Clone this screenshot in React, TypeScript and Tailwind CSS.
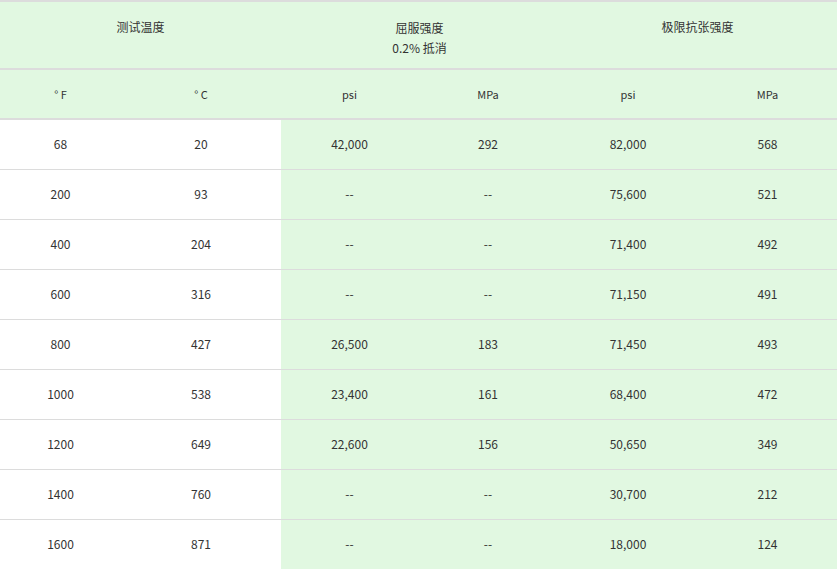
const rows = [
  ['68', '20', '42,000', '292', '82,000', '568'],
  ['200', '93', '--', '--', '75,600', '521'],
  ['400', '204', '--', '--', '71,400', '492'],
  ['600', '316', '--', '--', '71,150', '491'],
  ['800', '427', '26,500', '183', '71,450', '493'],
  ['1000', '538', '23,400', '161', '68,400', '472'],
  ['1200', '649', '22,600', '156', '50,650', '349'],
  ['1400', '760', '--', '--', '30,700', '212'],
  ['1600', '871', '--', '--', '18,000', '124'],
];

const font = { fontFamily: '"Noto Sans CJK SC", "DejaVu Sans", sans-serif' };

export default function App() {
  return (
    <div className="w-[837px] bg-white text-[12px] text-[#333]" style={font}>
      <table className="w-full border-collapse table-fixed">
        <colgroup>
          <col className="w-[121px]" />
          <col className="w-[160px]" />
          <col className="w-[137px]" />
          <col className="w-[140px]" />
          <col className="w-[140px]" />
          <col className="w-[139px]" />
        </colgroup>
        <thead>
          <tr className="h-[68px] bg-[#e1f8e1] border-y-2 border-[#dcdcdc]">
            <th colSpan={2} className="font-normal align-top pt-[16px]">测试温度</th>
            <th colSpan={2} className="font-normal align-top pt-[16px] leading-[20px]">
              屈服强度<br />0.2% 抵消
            </th>
            <th colSpan={2} className="font-normal align-top pt-[16px]">极限抗张强度</th>
          </tr>
          <tr className="h-[50px] bg-[#e1f8e1] border-b-2 border-[#dcdcdc]">
            {['° F', '° C', 'psi', 'MPa', 'psi', 'MPa'].map((h, i) => (
              <th key={i} className="font-normal text-[11px]">{h}</th>
            ))}
          </tr>
        </thead>
        <tbody>
          {rows.map((r, i) => (
            <tr key={i} className="h-[50px] border-b border-[#dcdcdc]">
              {r.map((c, j) => (
                <td key={j} className={`text-center ${j >= 2 ? 'bg-[#e1f8e1]' : ''}`}>{c}</td>
              ))}
            </tr>
          ))}
        </tbody>
      </table>
    </div>
  );
}
